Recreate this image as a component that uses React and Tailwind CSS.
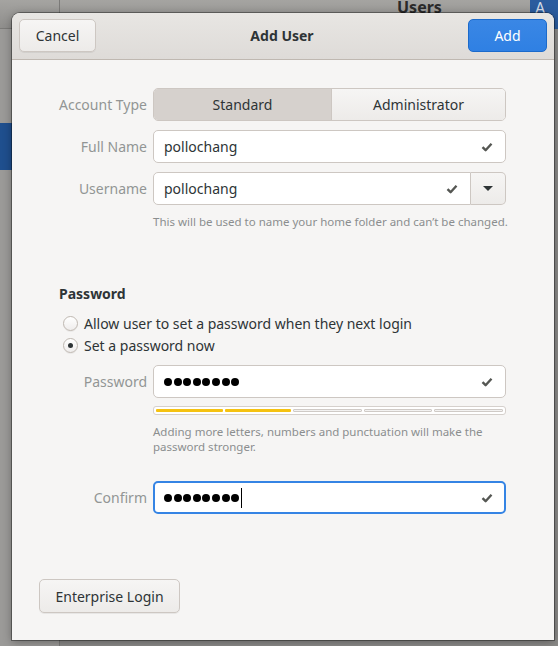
const font = { fontFamily: '"Noto Sans", "Open Sans", sans-serif' };

function Check() {
  return (
    <svg width="12" height="10" viewBox="0 0 12 10" className="shrink-0">
      <path d="M1.5 5.2 L4.6 8.2 L10.5 1.8" fill="none" stroke="#555753" strokeWidth="2.4" strokeLinejoin="round" />
    </svg>
  );
}

function Entry({ children, focused, className = "" }) {
  return (
    <div
      className={
        "flex h-[33px] items-center justify-between bg-white text-[14px] text-[#2e3436] " +
        (focused
          ? "rounded-[5px] border-2 border-[#3584e4] pl-[9px] pr-[11px] "
          : "rounded-[5px] border border-[#cdc7c2] pl-[10px] pr-[12px] ") +
        className
      }
    >
      {children}
    </div>
  );
}

function Dots() {
  return (
    <span className="flex items-center gap-[1.6px]">
      {Array.from({ length: 8 }).map((_, i) => (
        <span key={i} className="h-[8px] w-[8px] rounded-full bg-black" />
      ))}
    </span>
  );
}

function Label({ children }) {
  return (
    <div className="flex h-[33px] items-center justify-end pr-[6px] text-[14px] text-[#929595]">{children}</div>
  );
}

function Radio({ checked, children }) {
  return (
    <div className="flex h-[22px] items-center gap-[6px] pl-[51px] text-[14px] text-[#2e3436]">
      <span className="flex h-[15px] w-[15px] items-center justify-center rounded-full border border-[#bfb8b1] bg-gradient-to-b from-white to-[#efedec] shadow-[0_1px_0_rgba(0,0,0,0.05)]">
        {checked && <span className="h-[5px] w-[5px] rounded-full bg-[#2e3436]" />}
      </span>
      <span>{children}</span>
    </div>
  );
}

export default function App() {
  return (
    <div className="relative h-[646px] w-[558px] overflow-hidden bg-[#8e8d8b]" style={font}>
      {/* window underneath */}
      <div className="flex h-[29px] border-b border-[#7b7a78] bg-gradient-to-b from-[#a5a4a1] to-[#8f8e8c]">
        <div className="w-[60px] border-r border-[#7b7a78]" />
        <div className="relative flex-1">
          <span className="absolute left-[337px] top-[-5px] text-[16px] font-bold text-[#2a2a2a]">Users</span>
          <span className="absolute right-0 top-0 flex h-[29px] w-[28px] items-start bg-[#2b5c9e] pl-[5px] text-[16px] leading-[17px] text-[#d4dbe6]">
            A
          </span>
        </div>
      </div>
      <div className="flex h-[617px]">
        <div className="w-[60px] border-r border-[#7b7a78] bg-[#9b9a98] pt-[94px]">
          <div className="h-[47px] bg-[#1f4f8e]" />
        </div>
        <div className="flex-1 bg-[#8c8b89]" />
      </div>

      {/* dialog */}
      <div className="absolute left-[12px] top-[13px] flex h-[627px] w-[542px] flex-col overflow-hidden rounded-t-[8px] bg-[#f6f5f4] shadow-[0_0_0_1px_rgba(0,0,0,0.35),0_2px_10px_rgba(0,0,0,0.35)]">
        <div className="flex h-[47px] items-center justify-between border-b border-[#bfb8b1] bg-gradient-to-b from-[#e8e6e3] to-[#dedbd8] px-[7px] pb-[1px]">
          <button className="flex h-[33px] w-[77px] items-center justify-center rounded-[5px] border border-[#cdc7c2] bg-gradient-to-b from-[#f6f5f4] to-[#edebe9] text-[14px] text-[#2e3436] shadow-[0_1px_0_rgba(0,0,0,0.06)]">
            Cancel
          </button>
          <span className="text-[14px] font-bold text-[#2e3436]">Add User</span>
          <button className="flex h-[33px] w-[79px] items-center justify-center rounded-[5px] border border-[#1b6acb] bg-gradient-to-b from-[#3a87e5] to-[#2f80e3] text-[14px] text-white">
            Add
          </button>
        </div>

        <div className="flex flex-col pl-[40px] pr-[36px]">
          <div className="mt-[28px] grid grid-cols-[101px_353px] gap-y-[9px]">
            <Label>Account Type</Label>
            <div className="flex h-[33px] overflow-hidden rounded-[5px] border border-[#cdc7c2] text-[14px] text-[#2e3436]">
              <div className="flex w-[178px] items-center justify-center border-r border-[#cdc7c2] bg-[#d6d1cd]">
                Standard
              </div>
              <div className="flex flex-1 items-center justify-center bg-gradient-to-b from-[#f6f5f4] to-[#edebe9]">
                Administrator
              </div>
            </div>

            <Label>Full Name</Label>
            <Entry>
              <span>pollochang</span>
              <Check />
            </Entry>

            <Label>Username</Label>
            <div className="flex">
              <Entry className="flex-1 rounded-r-none">
                <span>pollochang</span>
                <Check />
              </Entry>
              <div className="flex h-[33px] w-[35px] items-center justify-center rounded-r-[5px] border border-l-0 border-[#cdc7c2] bg-gradient-to-b from-[#f6f5f4] to-[#edebe9]">
                <svg width="10" height="6" viewBox="0 0 10 6">
                  <path d="M0 0 H10 L5 5 Z" fill="#2e3436" />
                </svg>
              </div>
            </div>

            <div />
            <div className="whitespace-nowrap text-[11.5px] leading-[15px] text-[#8b8e8f]">
              This will be used to name your home folder and can’t be changed.
            </div>
          </div>

          <div className="mt-[55px] pl-[7px] text-[14px] font-bold leading-[20px] text-[#2e3436]">Password</div>
          <div className="mt-[8px] -ml-[40px] flex flex-col">
            <Radio>Allow user to set a password when they next login</Radio>
            <Radio checked>Set a password now</Radio>
          </div>

          <div className="mt-[9px] grid grid-cols-[101px_353px]">
            <Label>Password</Label>
            <Entry>
              <Dots />
              <Check />
            </Entry>

            <div />
            <div className="mt-[8px] flex h-[9px] gap-[2px] rounded-[3px] border border-[#d5d0cc] bg-white p-[2px]">
              <div className="flex-1 rounded-[1px] bg-[#f5c211]" />
              <div className="flex-1 rounded-[1px] bg-[#f5c211]" />
              <div className="flex-1 rounded-[1px] border border-[#cfcac6] bg-[#f3f2f1]" />
              <div className="flex-1 rounded-[1px] border border-[#cfcac6] bg-[#f3f2f1]" />
              <div className="flex-1 rounded-[1px] border border-[#cfcac6] bg-[#f3f2f1]" />
            </div>

            <div />
            <div className="mt-[9px] pr-[10px] text-[11.5px] leading-[15px] text-[#8b8e8f]">
              Adding more letters, numbers and punctuation will make the password stronger.
            </div>

            <div className="mt-[27px]">
              <Label>Confirm</Label>
            </div>
            <div className="mt-[27px]">
              <Entry focused>
                <span className="flex items-center">
                  <Dots />
                  <span className="ml-[2px] h-[20px] w-[1px] bg-black" />
                </span>
                <Check />
              </Entry>
            </div>
          </div>

          <div className="mt-[65px] -ml-[13px]">
            <button className="flex h-[34px] w-[141px] items-center justify-center rounded-[5px] border border-[#cdc7c2] bg-gradient-to-b from-[#f6f5f4] to-[#edebe9] text-[14px] text-[#2e3436] shadow-[0_1px_0_rgba(0,0,0,0.06)]">
              Enterprise Login
            </button>
          </div>
        </div>
      </div>
    </div>
  );
}
